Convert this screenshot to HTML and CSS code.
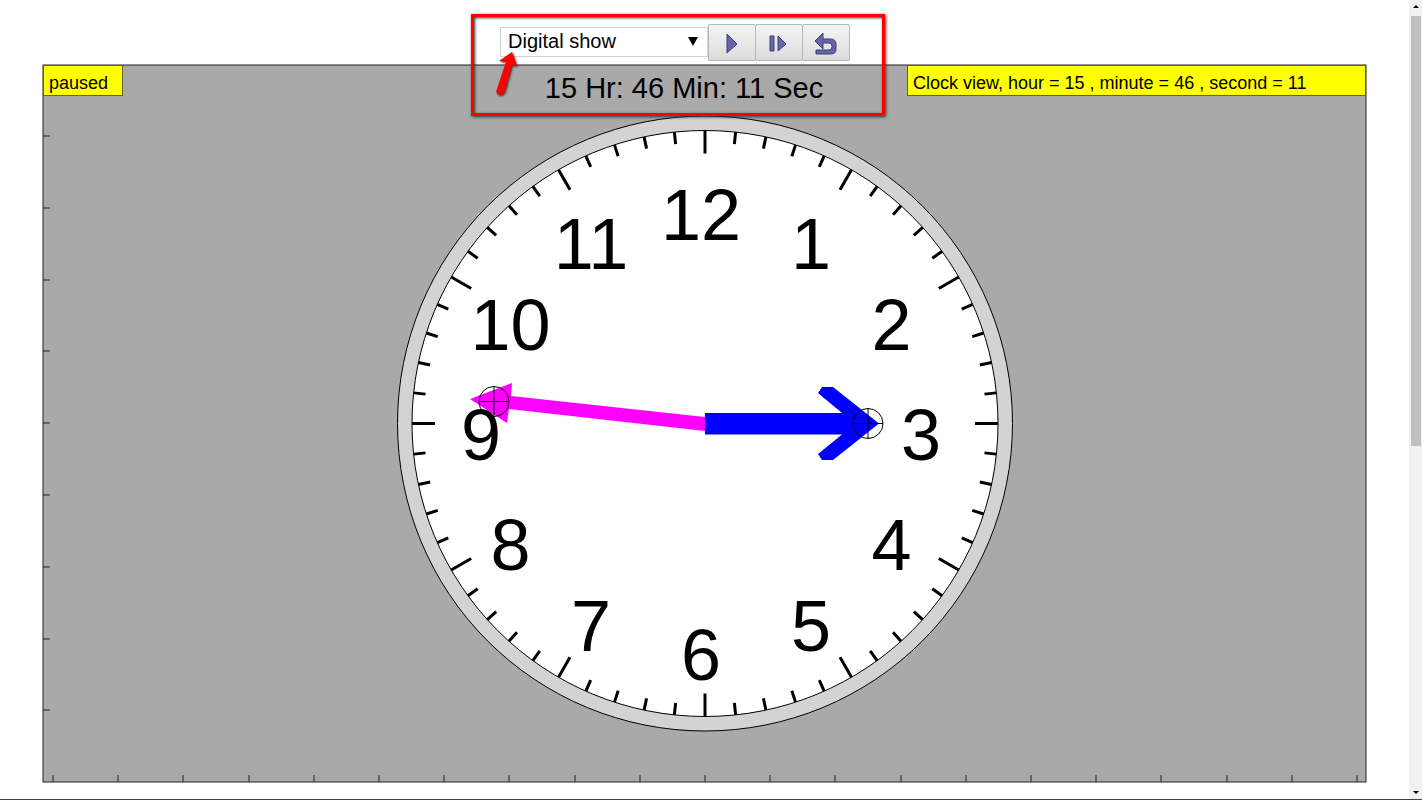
FILE: index.html
```
<!DOCTYPE html>
<html lang="en">
<head>
  <meta charset="UTF-8" />
  <meta name="viewport" content="width=device-width, initial-scale=1.0"/>
  <title>Clock Simulation</title>
  <link rel="stylesheet" href="styles.css">
</head>
<body>
  <div class="page">
    <main class="content">
      <div class="toolbar">
        <div class="controls">
          <div class="select-wrap">
            <select class="mode" id="mode" aria-label="Display mode">
              <option>Digital show</option>
              <option>Digital hide</option>
            </select>
            <svg class="caret" viewBox="0 0 10 10" aria-hidden="true"><path d="M0 1h10L5 10z"/></svg>
          </div>
          <button type="button" class="control" aria-label="Play">
            <svg viewBox="0 0 24 24"><path d="M7 2l10 10L7 21z"/></svg>
          </button>
          <button type="button" class="control" aria-label="Step">
            <svg viewBox="0 0 24 24"><path d="M3 4h4v15H3zM11 4l8 8-8 7z"/></svg>
          </button>
          <button type="button" class="control" aria-label="Reset">
            <svg viewBox="0 0 24 24"><path d="M1 9l8-8v6h7q6 0 6 5v5q0 5-5 5H2v-4h13q3 0 3-3v-1q0-3-3-3H9v6z"/></svg>
          </button>

          <div class="highlight"></div>
          <svg class="pointer" viewBox="0 0 26 50" aria-hidden="true"><path d="M18 2l5 14-5-1-7 26q-2 5-6 4-4-2-2-6l9-27-7-1z"/></svg>
        </div>
      </div>

      <div class="stage">
        <svg class="clock" viewBox="0 0 1323 717">
          <rect class="backdrop" x="0" y="0" width="1323" height="717"/>
          <g class="ruler" id="ruler"></g>
          <circle class="rim" cx="662" cy="358.5" r="307.5"/>
          <circle class="face" cx="662" cy="358.5" r="293"/>
          <g id="ticks"></g>
          <g class="numbers" id="numbers"></g>
          <g class="minute-hand">
            <path d="M662 352L468 331l1-13-42 16 37 24 2-14 196 22z"/>
          </g>
          <g class="hour-hand">
            <path d="M662 348h137l-24-20 4-6h11l46 36.500-46 36.500h-11l-4-6 24-19.500H662z"/>
          </g>
          <g class="handle">
            <circle cx="451" cy="336.500" r="15"/>
            <path d="M436 336.500h30M451 321.500v30"/>
            <circle cx="825" cy="358.500" r="15"/>
            <path d="M810 358.500h30M825 343.500v30"/>
          </g>
          <text class="readout" x="641" y="33">15 Hr: 46 Min: 11 Sec</text>
        </svg>
        <div class="label status">paused</div>
        <div class="label info">Clock view, hour = 15 , minute = 46 , second = 11</div>
      </div>
    </main>

    <div class="scrollbar" aria-hidden="true">
      <svg viewBox="0 0 8 4"><path d="M0 4l4-4 4 4z"/></svg>
      <div class="track"><div class="thumb"></div></div>
      <svg viewBox="0 0 8 4"><path d="M0 0h8L4 4z"/></svg>
    </div>
  </div>

  <script>
    const svgNS = 'http://www.w3.org/2000/svg';
    const cx = 662;
    const cy = 358.5;

    const addLine = (parent, x1, y1, x2, y2, cls) => {
      const line = document.createElementNS(svgNS, 'line');
      line.setAttribute('x1', x1);
      line.setAttribute('y1', y1);
      line.setAttribute('x2', x2);
      line.setAttribute('y2', y2);
      if (cls) line.setAttribute('class', cls);
      parent.appendChild(line);
    };

    // minute and hour marks
    const ticks = document.getElementById('ticks');
    for (let i = 0; i < 60; i++) {
      const a = i * Math.PI / 30;
      const inner = i % 5 === 0 ? 270 : 281;
      addLine(ticks, cx + 293 * Math.sin(a), cy - 293 * Math.cos(a),
        cx + inner * Math.sin(a), cy - inner * Math.cos(a), 'tick');
    }

    const numbers = document.getElementById('numbers');
    for (let n = 1; n <= 12; n++) {
      const a = n * Math.PI / 6;
      const text = document.createElementNS(svgNS, 'text');
      text.setAttribute('x', 658 + 220 * Math.sin(a));
      text.setAttribute('y', 395 - 220 * Math.cos(a));
      text.textContent = n;
      numbers.appendChild(text);
    }

    // axis marks along the left and bottom edges
    const ruler = document.getElementById('ruler');
    for (let i = 0; i < 9; i++) {
      const y = Math.round(71 + i * 71.8);
      addLine(ruler, 0, y, 7, y);
    }
    for (let i = 0; i <= 20; i++) {
      const x = Math.round(10 + i * 65.2);
      addLine(ruler, x, 710, x, 717);
    }
  </script>
</body>
</html>
```
FILE: styles.css
```
body {
  font-family: "Liberation Sans", Arial, sans-serif;
  margin: 0;
  background: #ffffff;
  color: #000;
}

.page {
  display: flex;
  min-height: 100vh;
  box-sizing: border-box;
  border-bottom: 1px solid #444;
}

.content {
  flex: 1;
  padding: 0 43px 16px;
}

.toolbar {
  display: flex;
  justify-content: center;
  padding: 24px 60px 4px 0;
}

.controls {
  position: relative;
  display: flex;
  align-items: flex-start;
}

.select-wrap {
  position: relative;
  margin-top: 3px;
}

.mode {
  appearance: none;
  display: block;
  width: 208px;
  height: 30px;
  padding: 0 7px 2px;
  border: 1px solid #d3d3d3;
  border-radius: 0;
  background: #fff;
  font-family: inherit;
  font-size: 20px;
  color: #000;
}

.caret {
  position: absolute;
  top: 9px;
  right: 10px;
  width: 10px;
  height: 10px;
  pointer-events: none;
}

.control {
  display: flex;
  align-items: center;
  justify-content: center;
  width: 48px;
  height: 37px;
  margin-right: -1px;
  padding: 2px 0 0;
  border: 1px solid #b8b8b8;
  border-radius: 2px;
  background: linear-gradient(#f4f4f4, #dcdcdc);
  cursor: pointer;
}

.control svg {
  width: 24px;
  height: 24px;
  fill: #6666a6;
  stroke: #3f3f78;
  stroke-width: 1px;
}

/* callout around the controls and the readout */
.highlight {
  position: absolute;
  top: -10px;
  left: -29px;
  right: -36px;
  height: 96px;
  border: 3px solid #f00;
  box-shadow: 1px 1px 3px #333, inset 1px 1px 3px #333;
  pointer-events: none;
  z-index: 2;
}

.pointer {
  position: absolute;
  top: 26px;
  left: -6px;
  width: 26px;
  height: 50px;
  fill: #f00;
  filter: drop-shadow(1px 1px 1px #333);
  pointer-events: none;
  z-index: 2;
}

.stage {
  position: relative;
}

.clock {
  display: block;
  width: 100%;
  overflow: visible;
}

.backdrop {
  fill: #a9a9a9;
  stroke: #222;
}

.ruler {
  stroke: #222;
}

.rim {
  fill: #d3d3d3;
  stroke: #000;
}

.face {
  fill: #fff;
  stroke: #000;
}

.tick {
  stroke: #000;
  stroke-width: 3px;
}

.numbers {
  font-size: 72px;
  text-anchor: middle;
}

.minute-hand {
  fill: #f0f;
}

.hour-hand {
  fill: #00f;
}

.handle {
  fill: none;
  stroke: #000;
}

.readout {
  font-size: 29px;
  text-anchor: middle;
}

.label {
  position: absolute;
  top: 0;
  box-sizing: border-box;
  height: 31px;
  padding: 5px;
  border: 1px solid #666600;
  background: #ff0;
  font-size: 18px;
  line-height: 24px;
  white-space: nowrap;
}

.status {
  left: 0;
  width: 80px;
}

.info {
  right: 0;
  width: 459px;
}

.scrollbar {
  display: flex;
  flex-direction: column;
  align-items: center;
  width: 13px;
  padding: 5px 0;
  box-sizing: border-box;
  background: #f1f1f1;
}

.scrollbar svg {
  width: 6px;
  height: 3px;
}

.track {
  flex: 1;
  width: 10px;
  margin: 8px 0;
}

.thumb {
  height: 56%;
  background: #c1c1c1;
}
```
